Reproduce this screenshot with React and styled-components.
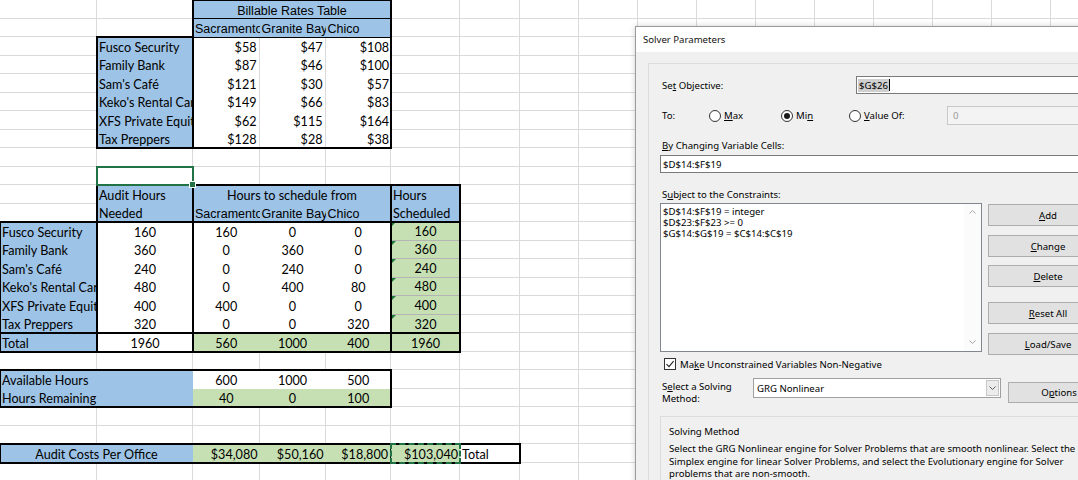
import React from 'react';
import styled, { createGlobalStyle, css } from 'styled-components';

const BLUE = '#9dc3e6';
const GREEN = '#c6e0b4';
const COLS = [97, 96, 66.5, 66, 65.5, 69, 60, 59, 59, 59, 59, 59, 59, 59, 59, 59, 59];

const GlobalStyle = createGlobalStyle`
  html, body { margin: 0; padding: 0; background: #fff; overflow: hidden; }
  body { width: 1078px; height: 480px; }
`;

const Stage = styled.div`
  position: relative;
  width: 1078px;
  height: 480px;
  overflow: hidden;
`;

const Sheet = styled.div`
  display: grid;
  grid-template-columns: ${COLS.map((c) => c + 'px').join(' ')};
  grid-template-rows: repeat(26, 18.5px);
  font-family: Lato, "Liberation Sans", sans-serif;
  font-size: 12.6px;
  color: #000;
`;

const place = css`
  grid-column: ${(p) => p.$c} / span ${(p) => p.$w || 1};
  grid-row: ${(p) => p.$r} / span ${(p) => p.$h || 1};
`;

const GridCell = styled.div`
  ${place};
  border-right: 1px solid #dadada;
  border-bottom: 1px solid #dadada;
`;

const Cell = styled.div`
  ${place};
  position: relative;
  z-index: 1;
  background: ${(p) => p.$bg || '#fff'};
  display: flex;
  align-items: flex-end;
  justify-content: ${(p) =>
    p.$align === 'right' ? 'flex-end' : p.$align === 'center' ? 'center' : 'flex-start'};
  padding: 0 2px 0 2px;
  white-space: nowrap;
  overflow: hidden;
  line-height: 16px;
  ${(p) => p.$arial && css`
    font-family: "Liberation Sans", Arial, sans-serif;
    font-size: 12.5px;
    padding-bottom: 1px;
    line-height: 14px;
  `}
  ${(p) => p.$vline && css`border-right: 1px solid #dadada;`}
  ${(p) => p.$hline && css`border-bottom: 1px solid #b4b4b4;`}
  ${(p) => p.$blackRight && css`border-right: 1px solid #000;`}
  ${(p) => p.$flag && css`
    &::before {
      content: '';
      position: absolute;
      left: 0;
      top: 0;
      border-top: 5px solid #1e7a3c;
      border-right: 5px solid transparent;
    }
  `}
`;

const Frame = styled.div`
  ${place};
  z-index: 2;
  pointer-events: none;
  margin: ${(p) => (p.$thin ? '-0.5px' : '-1px')};
  border: ${(p) => (p.$thin ? '1px' : '2px')} solid #000;
`;

const DashFrame = styled.div`
  ${place};
  z-index: 3;
  pointer-events: none;
  margin: -1px;
  border: 2px dashed #217346;
`;

const SelFrame = styled.div`
  ${place};
  z-index: 3;
  position: relative;
  margin: -1px;
  border: 2px solid #217346;
`;

const FillHandle = styled.span`
  position: absolute;
  right: -4px;
  bottom: -4px;
  width: 5px;
  height: 5px;
  background: #217346;
  border: 1px solid #fff;
`;

/* ---------- Dialog ---------- */

const Dialog = styled.div`
  position: absolute;
  left: 635px;
  top: 26px;
  width: 480px;
  height: 470px;
  border: 1px solid #9a9a9a;
  background: #f0f0f0;
  display: flex;
  flex-direction: column;
  font-family: "Noto Sans", "Liberation Sans", sans-serif;
  font-size: 9.6px;
  color: #000;
  box-shadow: 0 0 6px rgba(0, 0, 0, 0.18);
`;

const TitleBar = styled.div`
  height: 25px;
  flex: none;
  background: #fff;
  display: flex;
  align-items: center;
  padding-left: 7px;
  font-size: 9.6px;
  color: #111;
`;

const DialogBody = styled.div`
  flex: 1;
  padding: 11px 0 0 12px;
  display: flex;
`;

const Panel = styled.div`
  flex: 1;
  border: 1px solid #dcdcdc;
  border-right: none;
  border-bottom: none;
  padding-left: 11px;
  display: flex;
  flex-direction: column;
`;

const U = styled.span`
  text-decoration: underline;
  text-underline-offset: 1px;
`;

const Row = styled.div`
  display: flex;
  align-items: ${(p) => p.$align || 'center'};
  margin-top: ${(p) => p.$mt || 0}px;
  height: ${(p) => (p.$h ? p.$h + 'px' : 'auto')};
  flex: none;
`;

const Label = styled.div`
  width: ${(p) => (p.$w ? p.$w + 'px' : 'auto')};
  padding-left: 2px;
  line-height: ${(p) => p.$lh || 13}px;
  padding-top: ${(p) => p.$pt || 0}px;
  margin-top: ${(p) => p.$mt || 0}px;
  flex: none;
  white-space: nowrap;
`;

const TextBox = styled.div`
  height: ${(p) => p.$h || 18}px;
  width: ${(p) => p.$w}px;
  box-sizing: border-box;
  margin-top: ${(p) => p.$mt || 0}px;
  border: 1px solid ${(p) => (p.$disabled ? '#c8c8c8' : '#7a7a7a')};
  background: ${(p) => (p.$disabled ? '#f3f3f3' : '#fff')};
  color: ${(p) => (p.$disabled ? '#9a9a9a' : '#000')};
  display: flex;
  align-items: center;
  padding-left: ${(p) => p.$pl || 2}px;
  flex: none;
  white-space: nowrap;
`;

const Selected = styled.span`
  background: #cfcfcf;
  padding: 0 1px;
`;

const Caret = styled.span`
  display: inline-block;
  width: 1px;
  height: 12px;
  background: #000;
`;

const RadioOpt = styled.div`
  width: ${(p) => p.$w}px;
  display: flex;
  align-items: center;
  gap: 3px;
  flex: none;
`;

const RadioDot = styled.span`
  width: 12px;
  height: 12px;
  box-sizing: border-box;
  border-radius: 50%;
  border: 1px solid #333;
  background: #fff;
  display: flex;
  align-items: center;
  justify-content: center;
  &::after {
    content: '';
    width: 6px;
    height: 6px;
    border-radius: 50%;
    background: ${(p) => (p.$on ? '#1a1a1a' : 'transparent')};
  }
`;

const ConstraintArea = styled.div`
  display: flex;
  margin-top: 2px;
  flex: none;
`;

const ListBox = styled.div`
  width: 322px;
  height: 149px;
  box-sizing: border-box;
  border: 1px solid #82878f;
  background: #fff;
  display: flex;
  flex: none;
`;

const ListLines = styled.div`
  flex: 1;
  padding: 2px 0 0 2px;
  line-height: 11.2px;
  white-space: nowrap;
`;

const ScrollTrack = styled.div`
  width: 17px;
  background: #fbfbfb;
  display: flex;
  flex-direction: column;
  align-items: center;
  justify-content: space-between;
  padding: 6px 0 7px;
`;

const ButtonCol = styled.div`
  display: flex;
  flex-direction: column;
  margin-left: 6px;
`;

const Button = styled.div`
  width: ${(p) => p.$w || 120}px;
  height: ${(p) => p.$h || 22}px;
  box-sizing: border-box;
  margin-top: ${(p) => p.$mt || 0}px;
  margin-left: ${(p) => p.$ml || 0}px;
  background: #e1e1e1;
  border: 1px solid #adadad;
  display: flex;
  align-items: center;
  justify-content: center;
  flex: none;
`;

const CheckBox = styled.span`
  width: 12px;
  height: 12px;
  box-sizing: border-box;
  border: 1px solid #333;
  background: #fff;
  margin-left: 4px;
  margin-right: 4px;
  display: flex;
  align-items: center;
  justify-content: center;
  flex: none;
`;

const Select = styled.div`
  width: 248px;
  height: 20px;
  box-sizing: border-box;
  border: 1px solid #a0a0a0;
  background: #fff;
  display: flex;
  align-items: center;
  flex: none;
`;

const SelectText = styled.span`
  flex: 1;
  padding-left: 3px;
`;

const SelectArrow = styled.span`
  width: 13px;
  height: 16px;
  margin-right: 1px;
  box-sizing: border-box;
  border: 1px solid #c6c6c6;
  background: #ececec;
  display: flex;
  align-items: center;
  justify-content: center;
`;

const GroupBox = styled.div`
  margin-top: 11px;
  border: 1px solid #dcdcdc;
  border-right: none;
  padding: 8px 0 0 8px;
  flex: 1;
`;

const GroupTitle = styled.div`
  line-height: 13px;
  white-space: nowrap;
`;

const GroupText = styled.div`
  margin-top: 5px;
  line-height: 12.7px;
  white-space: nowrap;
`;

const Chevron = ({ up, color = '#a8a8a8' }) => (
  <svg width="7" height="4" viewBox="0 0 7 4">
    <path d={up ? 'M0.5 3.5 L3.5 0.5 L6.5 3.5' : 'M0.5 0.5 L3.5 3.5 L6.5 0.5'} fill="none" stroke={color} strokeWidth="1" />
  </svg>
);

const rates = [
  ['Fusco Security', '$58', '$47', '$108'],
  ['Family Bank', '$87', '$46', '$100'],
  ["Sam's Café", '$121', '$30', '$57'],
  ["Keko's Rental Cars", '$149', '$66', '$83'],
  ['XFS Private Equity', '$62', '$115', '$164'],
  ['Tax Preppers', '$128', '$28', '$38'],
];

const hours = [
  ['Fusco Security', '160', '160', '0', '0', '160'],
  ['Family Bank', '360', '0', '360', '0', '360'],
  ["Sam's Café", '240', '0', '240', '0', '240'],
  ["Keko's Rental Cars", '480', '0', '400', '80', '480'],
  ['XFS Private Equity', '400', '400', '0', '0', '400'],
  ['Tax Preppers', '320', '0', '0', '320', '320'],
];

export default function App() {
  const grid = [];
  for (let r = 1; r <= 26; r++) {
    for (let c = 1; c <= COLS.length; c++) {
      grid.push(<GridCell key={`g${r}-${c}`} $c={c} $r={r} />);
    }
  }

  return (
    <Stage>
      <GlobalStyle />
      <Sheet>
        {grid}

        {/* Billable rates table */}
        <Cell $c={3} $r={1} $w={3} $bg={BLUE} $align="center" $arial>Billable Rates Table</Cell>
        <Cell $c={3} $r={2} $bg={BLUE} $arial>Sacramento</Cell>
        <Cell $c={4} $r={2} $bg={BLUE} $arial>Granite Bay</Cell>
        <Cell $c={5} $r={2} $bg={BLUE} $arial>Chico</Cell>
        {rates.map((row, i) => (
          <React.Fragment key={`rt${i}`}>
            <Cell $c={2} $r={3 + i} $bg={BLUE}>{row[0]}</Cell>
            <Cell $c={3} $r={3 + i} $align="right" $vline>{row[1]}</Cell>
            <Cell $c={4} $r={3 + i} $align="right" $vline>{row[2]}</Cell>
            <Cell $c={5} $r={3 + i} $align="right">{row[3]}</Cell>
          </React.Fragment>
        ))}
        <Frame $c={3} $r={1} $w={3} $h={8} />
        <Frame $c={3} $r={1} $w={3} $thin />
        <Frame $c={3} $r={2} $w={3} $thin />
        <Frame $c={2} $r={3} $h={6} />

        {/* selected cell */}
        <SelFrame $c={2} $r={10}>
          <FillHandle />
        </SelFrame>

        {/* Hours table */}
        <Cell $c={2} $r={11} $bg={BLUE}>Audit Hours</Cell>
        <Cell $c={2} $r={12} $bg={BLUE}>Needed</Cell>
        <Cell $c={3} $r={11} $w={3} $bg={BLUE} $align="center">Hours to schedule from</Cell>
        <Cell $c={3} $r={12} $bg={BLUE} $arial>Sacramento</Cell>
        <Cell $c={4} $r={12} $bg={BLUE} $arial>Granite Bay</Cell>
        <Cell $c={5} $r={12} $bg={BLUE} $arial>Chico</Cell>
        <Cell $c={6} $r={11} $bg={BLUE}>Hours</Cell>
        <Cell $c={6} $r={12} $bg={BLUE}>Scheduled</Cell>
        {hours.map((row, i) => (
          <React.Fragment key={`hr${i}`}>
            <Cell $c={1} $r={13 + i} $bg={BLUE}>{row[0]}</Cell>
            <Cell $c={2} $r={13 + i} $align="center">{row[1]}</Cell>
            <Cell $c={3} $r={13 + i} $align="center">{row[2]}</Cell>
            <Cell $c={4} $r={13 + i} $align="center">{row[3]}</Cell>
            <Cell $c={5} $r={13 + i} $align="center">{row[4]}</Cell>
            <Cell $c={6} $r={13 + i} $align="center" $bg={GREEN} $hline={i < 5} $flag>{row[5]}</Cell>
          </React.Fragment>
        ))}
        <Cell $c={1} $r={19} $bg={BLUE}>Total</Cell>
        <Cell $c={2} $r={19} $align="center">1960</Cell>
        <Cell $c={3} $r={19} $align="center" $bg={GREEN}>560</Cell>
        <Cell $c={4} $r={19} $align="center" $bg={GREEN}>1000</Cell>
        <Cell $c={5} $r={19} $align="center" $bg={GREEN}>400</Cell>
        <Cell $c={6} $r={19} $align="center" $bg={GREEN}>1960</Cell>
        <Frame $c={2} $r={11} $w={5} $h={9} />
        <Frame $c={3} $r={11} $w={3} $h={9} />
        <Frame $c={1} $r={13} $w={6} $h={6} />
        <Frame $c={1} $r={19} $w={6} />

        {/* Available hours */}
        <Cell $c={1} $r={21} $w={2} $bg={BLUE}>Available Hours</Cell>
        <Cell $c={3} $r={21} $align="center">600</Cell>
        <Cell $c={4} $r={21} $align="center">1000</Cell>
        <Cell $c={5} $r={21} $align="center">500</Cell>
        <Cell $c={1} $r={22} $w={2} $bg={BLUE}>Hours Remaining</Cell>
        <Cell $c={3} $r={22} $align="center" $bg={GREEN}>40</Cell>
        <Cell $c={4} $r={22} $align="center" $bg={GREEN}>0</Cell>
        <Cell $c={5} $r={22} $align="center" $bg={GREEN}>100</Cell>
        <Frame $c={1} $r={21} $w={5} $h={2} />

        {/* Audit costs */}
        <Cell $c={1} $r={25} $w={2} $bg={BLUE} $align="center">Audit Costs Per Office</Cell>
        <Cell $c={3} $r={25} $align="right" $bg={GREEN}>$34,080</Cell>
        <Cell $c={4} $r={25} $align="right" $bg={GREEN}>$50,160</Cell>
        <Cell $c={5} $r={25} $align="right" $bg={GREEN} $blackRight>$18,800</Cell>
        <Cell $c={6} $r={25} $align="right" $bg={GREEN}>$103,040</Cell>
        <Cell $c={7} $r={25}>Total</Cell>
        <Frame $c={1} $r={25} $w={7} />
        <DashFrame $c={6} $r={25} />
      </Sheet>

      <Dialog>
        <TitleBar>Solver Parameters</TitleBar>
        <DialogBody>
          <Panel>
            <Row $mt={12} $h={18}>
              <Label $w={194}>Se<U>t</U> Objective:</Label>
              <TextBox $w={260} $pl={1}>
                <Selected>$G$26</Selected>
                <Caret />
              </TextBox>
            </Row>

            <Row $mt={12} $h={19}>
              <Label $w={47}>To:</Label>
              <RadioOpt $w={72}>
                <RadioDot />
                <span><U>M</U>ax</span>
              </RadioOpt>
              <RadioOpt $w={68}>
                <RadioDot $on />
                <span>Mi<U>n</U></span>
              </RadioOpt>
              <RadioOpt $w={98}>
                <RadioDot />
                <span><U>V</U>alue Of:</span>
              </RadioOpt>
              <TextBox $w={200} $h={19} $disabled $pl={5}>0</TextBox>
            </Row>

            <Label $mt={14}><U>B</U>y Changing Variable Cells:</Label>
            <TextBox $w={430} $mt={3} $pl={2}>$D$14:$F$19</TextBox>

            <Label $mt={15}>S<U>u</U>bject to the Constraints:</Label>
            <ConstraintArea>
              <ListBox>
                <ListLines>
                  $D$14:$F$19 = integer<br />
                  $D$23:$F$23 &gt;= 0<br />
                  $G$14:$G$19 = $C$14:$C$19
                </ListLines>
                <ScrollTrack>
                  <Chevron up />
                  <Chevron />
                </ScrollTrack>
              </ListBox>
              <ButtonCol>
                <Button $mt={1}><U>A</U>dd</Button>
                <Button $mt={9}><U>C</U>hange</Button>
                <Button $mt={8}><U>D</U>elete</Button>
                <Button $mt={15}><U>R</U>eset All</Button>
                <Button $mt={9}><U>L</U>oad/Save</Button>
              </ButtonCol>
            </ConstraintArea>

            <Row $mt={3} $h={12}>
              <CheckBox>
                <svg width="10" height="10" viewBox="0 0 10 10">
                  <path d="M1.5 5.2 L4 7.6 L8.6 2.2" fill="none" stroke="#222" strokeWidth="1.1" />
                </svg>
              </CheckBox>
              <span>Ma<U>k</U>e Unconstrained Variables Non-Negative</span>
            </Row>

            <Row $mt={8} $align="flex-start">
              <Label $w={91} $lh={12} $pt={3}>
                S<U>e</U>lect a Solving<br />Method:
              </Label>
              <Select>
                <SelectText>GRG Nonlinear</SelectText>
                <SelectArrow>
                  <Chevron color="#606060" />
                </SelectArrow>
              </Select>
              <Button $mt={4} $ml={7} $w={102} $h={21}>O<U>p</U>tions</Button>
            </Row>

            <GroupBox>
              <GroupTitle>Solving Method</GroupTitle>
              <GroupText>
                Select the GRG Nonlinear engine for Solver Problems that are smooth nonlinear. Select the LP<br />
                Simplex engine for linear Solver Problems, and select the Evolutionary engine for Solver<br />
                problems that are non-smooth.
              </GroupText>
            </GroupBox>
          </Panel>
        </DialogBody>
      </Dialog>
    </Stage>
  );
}
